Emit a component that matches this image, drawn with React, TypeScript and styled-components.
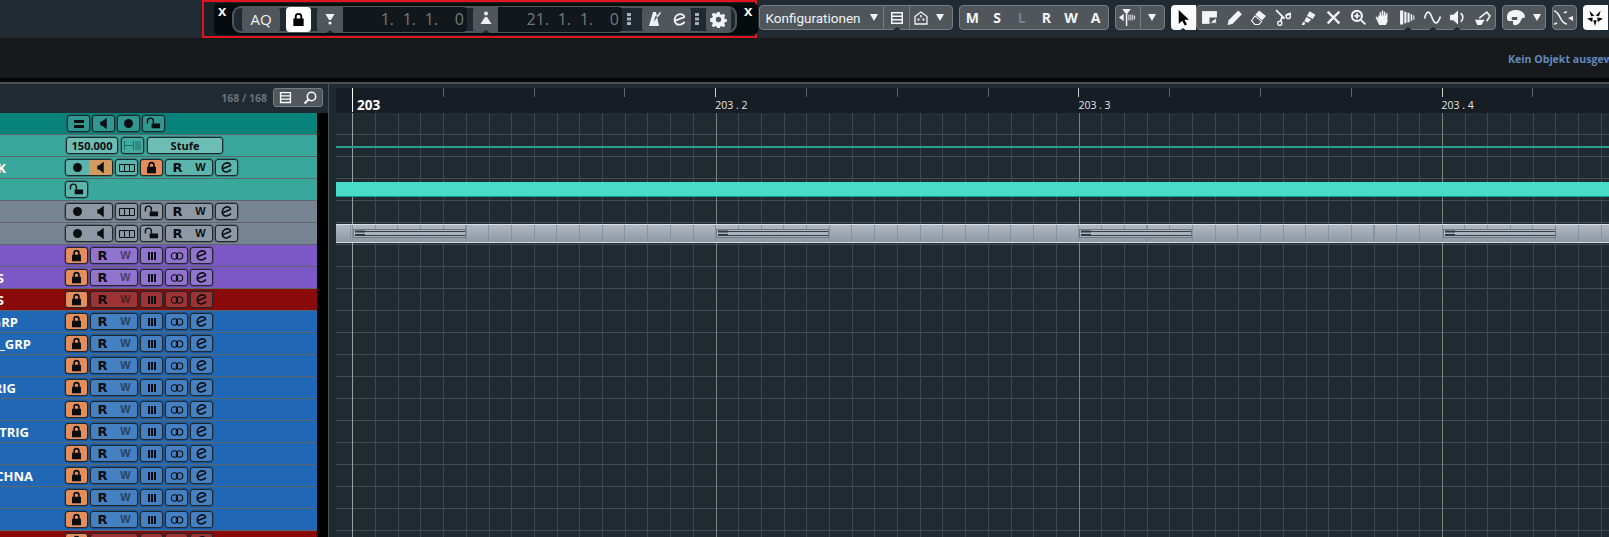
import React from "react";
import styled, { createGlobalStyle } from "styled-components";

const GlobalStyle = createGlobalStyle`
  html, body { margin: 0; padding: 0; background: #17191b; overflow: hidden; }
  * { box-sizing: border-box; }
`;

const Page = styled.div`
  width: 1609px;
  height: 537px;
  overflow: hidden;
  display: flex;
  flex-direction: column;
  font-family: "Open Sans", "Liberation Sans", sans-serif;
  background: #17191b;
`;

const TopBar = styled.div`
  height: 38px;
  flex: none;
  display: flex;
  align-items: flex-start;
  padding-left: 202px;
  background: #1f2a32;
`;

const RedFrame = styled.div`
  width: 555px;
  height: 38px;
  flex: none;
  display: flex;
  align-items: stretch;
  padding: 1px 0 1px 10px;
  border: 2px solid #e0141e;
  background: #1a2127;
`;

const BlackPanel = styled.div`
  flex: 1;
  display: flex;
  align-items: center;
  border-radius: 5px;
  background: #060b0e;
  padding-left: 4px;
`;

const CloseMark = styled.span<{ $ml?: number }>`
  width: 14px;
  flex: none;
  align-self: flex-start;
  margin-left: ${(p) => p.$ml ?? 0}px;
  color: #fff;
  font: bold 15px/16px "Liberation Sans", sans-serif;
`;

const Capsule = styled.div`
  width: 505px;
  height: 27px;
  display: flex;
  align-items: center;
  padding-left: 8px;
  border: 2px solid #4f575c;
  border-radius: 9px;
  background: #1f2a30;
`;

const PanelButton = styled.div<{ $w: number; $gap?: number; $white?: boolean; $side?: string }>`
  position: relative;
  width: ${(p) => p.$w}px;
  height: 25px;
  flex: none;
  margin-right: ${(p) => p.$gap ?? 0}px;
  display: flex;
  align-items: center;
  justify-content: center;
  color: ${(p) => (p.$white ? "#000" : "#f0f2f3")};
  background: ${(p) => (p.$white ? "#fff" : "#50565c")};
  border-radius: ${(p) => p.$side ?? "4px"};
  font-size: 15px;
`;

const TimeField = styled.div<{ $gap: number }>`
  width: 124px;
  height: 25px;
  flex: none;
  display: flex;
  justify-content: flex-end;
  align-items: center;
  margin-right: ${(p) => p.$gap}px;
  padding-right: 3px;
  border-radius: 0 4px 4px 0;
  background: #11171b;
  color: #737a7f;
  font-size: 16px;
`;

const TimeSegment = styled.span<{ $w: number }>`
  width: ${(p) => p.$w}px;
  text-align: right;
  white-space: nowrap;
`;

const PanelGroup = styled.div`
  width: 49px;
  height: 25px;
  flex: none;
  display: flex;
  align-items: center;
  justify-content: space-around;
  border-radius: 4px;
  background: #50565c;
  color: #f0f2f3;
`;

const DotSlot = styled.div<{ $w: number; $mr: number }>`
  width: ${(p) => p.$w}px;
  margin-right: ${(p) => p.$mr}px;
  flex: none;
  display: flex;
  justify-content: center;
  color: #aab0b4;
`;

const Group = styled.div<{ $ml: number }>`
  height: 25px;
  margin-top: 5px;
  margin-left: ${(p) => p.$ml}px;
  flex: none;
  display: flex;
  background: #50565c;
  border: 1px solid #777d82;
  border-radius: 4px;
  color: #f2f4f5;
`;

const Cell = styled.div<{ $w: number; $divider?: boolean; $pr?: number; $gap?: number }>`
  position: relative;
  width: ${(p) => p.$w}px;
  height: 100%;
  flex: none;
  display: flex;
  align-items: center;
  justify-content: center;
  gap: ${(p) => p.$gap ?? 7}px;
  padding-right: ${(p) => p.$pr ?? 0}px;
  border-left: ${(p) => (p.$divider ? "1px solid #777d82" : "none")};
  font-family: Roboto, "Open Sans", sans-serif;
  font-size: 13.5px;
`;

const WhiteTool = styled.div<{ $ml: number }>`
  position: relative;
  width: 25px;
  height: 25px;
  margin-top: 5px;
  margin-left: ${(p) => p.$ml}px;
  flex: none;
  display: flex;
  align-items: center;
  justify-content: center;
  background: #fbfbfb;
  color: #000;
  border-radius: 4px 0 0 4px;
`;

const Notch = styled.span`
  position: absolute;
  bottom: -1px;
  left: 50%;
  margin-left: -4px;
  width: 0;
  height: 0;
  border-left: 4px solid transparent;
  border-right: 4px solid transparent;
  border-bottom: 3px solid #1f2a32;
`;

const Caret = styled.span`
  width: 0;
  height: 0;
  border-left: 4px solid transparent;
  border-right: 4px solid transparent;
  border-top: 7px solid #f2f4f5;
`;

const StatusLetter = styled.span<{ $dim?: boolean }>`
  width: 24.67px;
  text-align: center;
  font: bold 14px/23px "Open Sans", sans-serif;
  color: ${(p) => (p.$dim ? "#7b8186" : "#f4f6f7")};
`;

const InfoBar = styled.div`
  height: 40px;
  flex: none;
  padding: 14px 0 0 1508px;
  white-space: nowrap;
  overflow: hidden;
  background: #17191b;
  color: #6289bb;
  font-size: 10.6px;
  font-weight: 700;
`;

const Separator = styled.div`
  height: 6px;
  flex: none;
  background: #050607;
  border-bottom: 2px solid #4b5257;
`;

const Main = styled.div`
  flex: 1;
  min-height: 0;
  display: flex;
  background: #1f2a31;
`;

const TrackColumn = styled.div`
  width: 329px;
  flex: none;
  display: flex;
  flex-direction: column;
  border-right: 1px solid #4b5358;
`;

const TrackHead = styled.div`
  height: 29px;
  flex: none;
  display: flex;
  align-items: flex-start;
  justify-content: flex-end;
  gap: 6px;
  padding: 4px 5px 0 0;
`;

const TrackCount = styled.span`
  line-height: 20px;
  color: #687379;
  font-size: 10.5px;
  font-weight: 700;
`;

const HeadButton = styled.div`
  width: 50px;
  height: 19px;
  display: flex;
  align-items: center;
  justify-content: space-around;
  background: #51575d;
  border: 1px solid #777d82;
  border-radius: 3px;
  color: #fff;
`;

const TrackList = styled.div`
  flex: 1;
  background: #000;
`;

const TrackRow = styled.div<{ $tint: string }>`
  width: 317px;
  height: 22px;
  display: flex;
  align-items: flex-start;
  padding-top: 2px;
  background: ${(p) => p.$tint};
  border-bottom: 1px solid #5d666b;
`;

const NameSlot = styled.div<{ $indent: number }>`
  width: ${(p) => p.$indent}px;
  height: 17px;
  flex: none;
`;

const NameText = styled.div<{ $end: number }>`
  width: ${(p) => p.$end}px;
  height: 17px;
  display: flex;
  justify-content: flex-end;
  overflow: hidden;
  white-space: nowrap;
  color: #fff;
  font-size: 13px;
  font-weight: 700;
  line-height: 18px;
`;

const Controls = styled.div<{ $gap?: number }>`
  display: flex;
  gap: ${(p) => p.$gap ?? 2}px;
`;

const toneFill = { lock: "#e48d5d", flat: "rgba(255,255,255,0.05)", light: "rgba(255,255,255,0.26)" };

const TrackButton = styled.div<{ $w?: number; $tone?: keyof typeof toneFill }>`
  width: ${(p) => p.$w ?? 23}px;
  height: 17px;
  flex: none;
  display: flex;
  align-items: center;
  justify-content: center;
  overflow: hidden;
  color: #0b0e10;
  border: 1px solid #20282c;
  box-shadow: 0 0 0 0.5px rgba(30, 38, 42, 0.6);
  border-radius: 3px;
  background: ${(p) => (p.$tone ? toneFill[p.$tone] : "rgba(255,255,255,0.17)")};
`;

const SplitSide = styled.div<{ $active?: boolean }>`
  flex: 1;
  height: 100%;
  display: flex;
  align-items: center;
  justify-content: center;
  background: ${(p) => (p.$active ? "#d49b60" : "transparent")};
`;

const Letter = styled.span<{ $narrow?: boolean; $dim?: boolean }>`
  font: bold ${(p) => (p.$narrow ? "11px" : "13px")} / 15px
    ${(p) => (p.$narrow ? '"Liberation Sans"' : '"DejaVu Sans"')}, sans-serif;
  opacity: ${(p) => (p.$dim ? 0.55 : 1)};
`;

const ValueText = styled.span`
  color: #0b0e10;
  font-size: 11px;
  font-weight: 700;
  line-height: 15px;
`;

const Arrangement = styled.div`
  position: relative;
  margin-left: 7px;
  width: 1273px;
  overflow: hidden;
  flex: none;
  padding-top: 4px;
`;

const Ruler = styled.div`
  height: 25px;
  display: flex;
  padding-left: 16px;
  background: #161d24;
`;

const RulerCell = styled.div<{ $kind: "bar" | "beat" | "sub" }>`
  position: relative;
  width: 90.8px;
  flex: none;
  padding: 10px 0 0 ${(p) => (p.$kind === "bar" ? 5 : 0)}px;
  color: ${(p) => (p.$kind === "bar" ? "#fff" : "#e2e6e8")};
  font-size: ${(p) => (p.$kind === "bar" ? 13.5 : 10.5)}px;
  font-weight: ${(p) => (p.$kind === "bar" ? 700 : 400)};
  line-height: 15px;
  white-space: nowrap;

  &::before {
    content: "";
    position: absolute;
    top: 0;
    left: 0;
    width: 1px;
    height: ${(p) => (p.$kind === "bar" ? 24 : 9)}px;
    background: ${(p) =>
      p.$kind === "bar" ? "#fff" : p.$kind === "beat" ? "#c9cdd0" : "#5f676c"};
  }
`;

const LaneArea = styled.div`
  position: relative;
  height: 424px;
`;

const GridLayer = styled.svg`
  position: absolute;
  inset: 0;
`;

const Lane = styled.div`
  position: relative;
  height: 22px;
`;

const AutomationLine = styled.div`
  position: absolute;
  top: 11px;
  left: 0;
  right: 0;
  height: 2px;
  background: #27a08f;
`;

const CyanEvent = styled.div`
  position: absolute;
  top: 3px;
  left: 0;
  right: 0;
  height: 15px;
  background: #48dcc8;
  border-bottom: 1px solid #149a8c;
`;

const PartStrip = styled.div`
  position: absolute;
  top: 1px;
  left: 0;
  right: 0;
  height: 19px;
  display: flex;
  align-items: center;
  padding-left: 17px;
  border-top: 1px solid #d7dde2;
  border-bottom: 1px solid #d7dde2;
  background:
    repeating-linear-gradient(
      90deg,
      #8592a0 0,
      #8592a0 1px,
      transparent 1px,
      transparent 22.7px
    ) 16px 0,
    linear-gradient(#b0b8c2, #8e98a4);
`;

const PartSlot = styled.div`
  width: 363.2px;
  flex: none;
  display: flex;
`;

function Ico({ size = 16, children }: { size?: number; children: React.ReactNode }) {
  return (
    <svg width={size} height={size} viewBox="0 0 16 16" fill="currentColor" stroke="none">
      {children}
    </svg>
  );
}

const LineSt = { fill: "none", stroke: "currentColor" };

const ListIcon = ({ size = 16 }: { size?: number }) => (
  <Ico size={size}>
    <path d="M2 2h12v12H2zM3.5 3.5v2h9v-2zM3.5 7v2h9V7zM3.5 10.5v2h9v-2z" fillRule="evenodd" />
  </Ico>
);
const SearchIcon = () => (
  <Ico>
    <circle cx="9.5" cy="6.5" r="4.2" {...LineSt} strokeWidth="1.5" />
    <path d="M6.5 9.5L2.5 13.5" {...LineSt} strokeWidth="2" />
  </Ico>
);
const LockIcon = ({ size = 13 }: { size?: number }) => (
  <Ico size={size}>
    <path d="M4 7V5a4 4 0 0 1 8 0v2h1.5v8h-11V7zM6 7h4V5a2 2 0 0 0-4 0z" fillRule="evenodd" />
  </Ico>
);
const OpenLockIcon = () => (
  <Ico size={15}>
    <path d="M1.5 8V5.5a3.2 3.2 0 0 1 6.4 0V8" {...LineSt} strokeWidth="1.5" />
    <path d="M6 8h9v5H6z" />
  </Ico>
);
const RecIcon = () => (
  <Ico size={13}>
    <circle cx="8" cy="8" r="5.5" />
  </Ico>
);
const SpeakerIcon = () => (
  <Ico size={13}>
    <path d="M6 5.5L12 1v14L6 10.5H4v-5z" />
  </Ico>
);
const BoxesIcon = () => (
  <svg width="16" height="10" viewBox="0 0 16 10" fill="none" stroke="currentColor">
    <path d="M.5 1.5h15v7H.5zM5.5 1.5v7M10.5 1.5v7" />
  </svg>
);
const BarsIcon = () => (
  <svg width="10" height="10" viewBox="0 0 10 10">
    <path d="M1 1h2v8H1zM4 1h2v8H4zM7 1h2v8H7z" fill="currentColor" />
  </svg>
);
const LinkIcon = () => (
  <svg width="14" height="10" viewBox="0 0 14 10" fill="none" stroke="currentColor" strokeWidth="1.1">
    <circle cx="4.500" cy="5" r="3.200" />
    <circle cx="9.500" cy="5" r="3.200" />
  </svg>
);
const EditIcon = ({ size = 13 }: { size?: number }) => (
  <Ico size={size}>
    <path d="M3 9.5L13 5.5C13 2.5 9 1.5 6 3C2.5 5 1.5 10 4.5 12.5C7 14.5 11 13.5 13.5 10.5" {...LineSt} strokeWidth="1.9" />
  </Ico>
);
const EqualIcon = () => (
  <svg width="12" height="8" viewBox="0 0 12 8">
    <path d="M1 0h10v3H1zM1 5h10v3H1z" fill="currentColor" />
  </svg>
);
const LeftLocator = () => (
  <Ico>
    <path d="M3.500 3h9L9 9H7z" />
    <circle cx="8" cy="12" r="1.600" />
  </Ico>
);
const RightLocator = () => (
  <Ico>
    <circle cx="8" cy="2.5" r="2" />
    <path d="M7 6h2l4.5 7h-11z" />
  </Ico>
);
const MetronomeIcon = () => (
  <Ico>
    <path d="M6 1h3l3 14H2zM8.2 5.5L6.8 11l5-7.5z" fillRule="evenodd" />
    <path d="M10 6l3.5-4.5" {...LineSt} strokeWidth="1.4" />
  </Ico>
);
const GearIcon = () => (
  <Ico size={17}>
    <path
      d="M6.8 1h2.4l.4 2 1.3.6 1.8-1.1 1.7 1.7-1.1 1.8.6 1.3 2 .4v2.4l-2 .4-.6 1.3 1.1 1.8-1.7 1.7-1.8-1.1-1.3.6-.4 2H6.8l-.4-2-1.3-.6-1.8 1.1-1.7-1.7 1.1-1.8-.6-1.3-2-.4V6.8l2-.4.6-1.3-1.1-1.8 1.7-1.7 1.8 1.1 1.3-.6zM8 5.5a2.5 2.5 0 1 0 0 5 2.5 2.5 0 0 0 0-5z"
      fillRule="evenodd"
    />
  </Ico>
);
const DotsIcon = () => (
  <svg width="4" height="12" viewBox="0 0 4 12">
    <path d="M0 0h4v3H0zM0 4.5h4v3H0zM0 9h4v3H0z" fill="currentColor" />
  </svg>
);
const PresetIcon = () => (
  <Ico>
    <path d="M2 6.5L8 2l6 4.5V14H2z" {...LineSt} strokeWidth="1.3" />
    <path d="M4.5 8.5h2v2h-2zM9.5 8.5h2v2h-2zM7.3 5h1.4v2.5H7.3z" />
  </Ico>
);
const DropIcon = () => (
  <svg width="19" height="19" viewBox="0 0 20 20">
    <path d="M1 10l5-4v8z" fill="currentColor" />
    <path d="M4.500 1h9L9.800 6v13H8.200V6z" fill="currentColor" />
    <path d="M11.500 7v6M13.500 7v6M15.500 7v6M17.500 8v4" stroke="currentColor" />
  </svg>
);

const toolIcons: React.ReactNode[] = [
  <Ico key="range" size={17}>
    <path d="M1 2h14v12H1z" />
    <path d="M8 8h7v6H8z" fill="#50565c" />
    <path d="M9 13l5-4v4z" />
  </Ico>,
  <Ico key="pencil" size={17}>
    <path d="M1.5 15l1-4.5L11.5 1.5 15 5 6 14z" />
  </Ico>,
  <Ico key="eraser" size={17}>
    <path d="M8.5 1.5l6.5 5-3.5 4-6.5-5z" />
    <path d="M4.5 6.5L11 11.5 8.5 14.5H4.5L1.5 11z" {...LineSt} />
  </Ico>,
  <Ico key="scissors" size={17}>
    <path d="M1 1l8 8M10 6l5-2M5 12l2-5" {...LineSt} strokeWidth="1.8" />
    <circle cx="12.5" cy="7" r="2" {...LineSt} strokeWidth="1.3" />
    <circle cx="4.5" cy="13.5" r="2" {...LineSt} strokeWidth="1.3" />
  </Ico>,
  <Ico key="glue" size={17}>
    <path d="M9 2l5.5 3.5L12 9.5 6.5 6.5z" />
    <path d="M6 7.5l4.5 2.5-3 3-3.5-1.5z" />
    <path d="M1.5 15l1.5-3 2 1-1 2z" />
  </Ico>,
  <Ico key="erase" size={17}>
    <path d="M2.5 2.5l11 11M13.5 2.5l-11 11" {...LineSt} strokeWidth="2.2" />
  </Ico>,
  <Ico key="zoom" size={17}>
    <circle cx="6.5" cy="6.5" r="4.7" {...LineSt} strokeWidth="2" />
    <path d="M10 10l4.5 4.5M4 6.5h5M6.5 4v5" {...LineSt} strokeWidth="1.8" />
  </Ico>,
  <Ico key="hand" size={17}>
    <path d="M4 6h1.3V3h1.4v3h.6V1.500h1.400V6h.6V2.500h1.400V6h.6V4h1.400v8l-1.500 3H5l-2.500-5-1-2.500 1-.5L4 9z" />
  </Ico>,
  <Ico key="comp" size={17}>
    <path d="M1 1.500h3v13H1zM5 2.500h2v11H5zM8 3.500h2v9H8zM11 5h1.500v6H11zM13.500 6h1v4h-1z" />
  </Ico>,
  <Ico key="wave" size={17}>
    <path d="M0.500 9C2.500 1 5 1 7.500 8s5 7 8 -1" {...LineSt} strokeWidth="1.6" />
  </Ico>,
  <Ico key="volume" size={17}>
    <path d="M1 5.500h3L8.500 1.500v13L4 10.500H1z" />
    <path d="M11 4a5 5 0 0 1 0 8" {...LineSt} strokeWidth="1.5" />
  </Ico>,
  <Ico key="paint" size={17}>
    <path d="M1 10h9l-3 5H3z" />
    <path d="M5 8.500L12 3l3 3.500-3 5" {...LineSt} strokeWidth="1.5" />
  </Ico>,
];

const CursorIcon = () => (
  <Ico size={17}>
    <path d="M3.500 1v13l3.300-3 2.400 4.500 2-1-2.300-4.400h4.300z" />
  </Ico>
);
const FaceIcon = () => (
  <svg width="20" height="18" viewBox="0 0 20 18">
    <path
      d="M1 8C1 3 5 1 10 1s9 3 9 7c0 1-2 1-3 1-1 3-3 7-6 7-3 1-3-1-3-4H3C1 12 1 10 1 8zM6 8a3 3 0 0 0 0 3h5a3 3 0 0 0 0-3z"
      fill="currentColor"
      fillRule="evenodd"
    />
  </svg>
);
const CurveIcon = () => (
  <svg width="22" height="18" viewBox="0 0 22 18" fill="none" stroke="currentColor" strokeWidth="1.500">
    <path d="M1 2c6 0 6 13 13 13M1 15c1 0 2-.5 3-1M11 4c1-1 2-1 3-1" />
    <path d="M15 9l5-2v5z" fill="currentColor" stroke="none" />
  </svg>
);
const CollapseIcon = () => (
  <Ico size={18}>
    <path d="M3 1.500l4.500 4.500-3 .5zM13 1.500l-4.500 4.500 3 .5zM1 8.500l5-1-.5 4zM15 8.500l-5-1 .5 4zM6.500 10l1.500 5 1.500-5z" />
  </Ico>
);

const PartDrawing = () => (
  <svg width="113" height="9" viewBox="0 0 113 9">
    <rect x="0.500" y="0.500" width="112" height="8" fill="#aab2bb" stroke="#6e7b87" />
    <path d="M2 1.500h10v2H2zM2 5h10v2H2z" fill="#33383c" />
    <path d="M12 2.500h100M12 6.500h100" stroke="#3a3f43" />
  </svg>
);

type TrackSpec = {
  tint: string;
  name?: string;
  end?: number;
  kind: "folder" | "tempo" | "master" | "lockOnly" | "audio" | "group";
};

const TEAL = "#3aa79c";
const SLATE = "#778493";
const PURPLE = "#7b58c5";
const CRIMSON = "#8a0a0c";
const BLUE = "#2067b6";

const tracks: TrackSpec[] = [
  { tint: "#08837c", kind: "folder" },
  { tint: TEAL, kind: "tempo" },
  { tint: TEAL, kind: "master", name: "K", end: 6 },
  { tint: TEAL, kind: "lockOnly" },
  { tint: SLATE, kind: "audio" },
  { tint: SLATE, kind: "audio" },
  { tint: PURPLE, kind: "group" },
  { tint: PURPLE, kind: "group", name: "S", end: 4 },
  { tint: CRIMSON, kind: "group", name: "S", end: 4 },
  { tint: BLUE, kind: "group", name: "GRP", end: 18 },
  { tint: BLUE, kind: "group", name: "_GRP", end: 31 },
  { tint: BLUE, kind: "group" },
  { tint: BLUE, kind: "group", name: "RIG", end: 16 },
  { tint: BLUE, kind: "group" },
  { tint: BLUE, kind: "group", name: "TRIG", end: 29 },
  { tint: BLUE, kind: "group" },
  { tint: BLUE, kind: "group", name: "CHNA", end: 33 },
  { tint: BLUE, kind: "group" },
  { tint: BLUE, kind: "group" },
  { tint: CRIMSON, kind: "group" },
];

function ReadWrite({ dimWrite }: { dimWrite?: boolean }) {
  return (
    <TrackButton $w={48}>
      <SplitSide>
        <Letter>R</Letter>
      </SplitSide>
      <SplitSide>
        <Letter $narrow $dim={dimWrite}>W</Letter>
      </SplitSide>
    </TrackButton>
  );
}

function AudioControls({ locked, active }: { locked?: boolean; active?: boolean }) {
  return (
    <Controls>
      <TrackButton $w={48}>
        <SplitSide>
          <RecIcon />
        </SplitSide>
        <SplitSide $active={active}>
          <SpeakerIcon />
        </SplitSide>
      </TrackButton>
      <TrackButton>
        <BoxesIcon />
      </TrackButton>
      <TrackButton $tone={locked ? "lock" : undefined}>
        {locked ? <LockIcon /> : <OpenLockIcon />}
      </TrackButton>
      <ReadWrite />
      <TrackButton>
        <EditIcon />
      </TrackButton>
    </Controls>
  );
}

function TrackControls({ kind }: { kind: TrackSpec["kind"] }) {
  switch (kind) {
    case "folder":
      return (
        <Controls>
          <TrackButton>
            <EqualIcon />
          </TrackButton>
          <TrackButton>
            <SpeakerIcon />
          </TrackButton>
          <TrackButton>
            <RecIcon />
          </TrackButton>
          <TrackButton>
            <OpenLockIcon />
          </TrackButton>
        </Controls>
      );
    case "tempo":
      return (
        <Controls $gap={3}>
          <TrackButton $w={52} $tone="light">
            <ValueText>150.000</ValueText>
          </TrackButton>
          <TrackButton $tone="flat">
            <svg width="17" height="9" viewBox="0 0 17 9" fill="none" stroke="#1c6f68">
              <path d="M.5 0v9M.5 4.500h9M9.500 0v9M12 0v9M14 0v9M16 0v9" />
            </svg>
          </TrackButton>
          <TrackButton $w={76} $tone="light">
            <ValueText>Stufe</ValueText>
          </TrackButton>
        </Controls>
      );
    case "master":
      return <AudioControls locked active />;
    case "lockOnly":
      return (
        <Controls>
          <TrackButton>
            <OpenLockIcon />
          </TrackButton>
        </Controls>
      );
    case "audio":
      return <AudioControls />;
    default:
      return (
        <Controls>
          <TrackButton $tone="lock">
            <LockIcon />
          </TrackButton>
          <ReadWrite dimWrite />
          <TrackButton>
            <BarsIcon />
          </TrackButton>
          <TrackButton>
            <LinkIcon />
          </TrackButton>
          <TrackButton>
            <EditIcon />
          </TrackButton>
        </Controls>
      );
  }
}

const indents: Partial<Record<TrackSpec["kind"], number>> = { folder: 67, tempo: 66 };

const rulerCells = Array.from({ length: 15 }, (_, i) => {
  if (i === 0) return { kind: "bar" as const, label: "203" };
  if (i % 4 === 0) return { kind: "beat" as const, label: `203 . ${i / 4 + 1}` };
  return { kind: "sub" as const, label: "" };
});

const gridColumns = Array.from({ length: 56 }, (_, i) => i);
const gridRows = Array.from({ length: 20 }, (_, i) => 21 + i * 22);

function gridStroke(i: number) {
  if (i === 0) return "#9a9c9d";
  return i % 16 === 0 ? "#7b7f81" : "#3f474b";
}

export default function App() {
  return (
    <Page>
      <GlobalStyle />
      <TopBar>
        <RedFrame>
          <BlackPanel>
            <CloseMark>x</CloseMark>
            <Capsule>
              <PanelButton $w={38} $gap={6}>AQ</PanelButton>
              <PanelButton $w={25} $gap={6} $white>
                <LockIcon size={15} />
              </PanelButton>
              <PanelButton $w={26} $side="4px 0 0 4px">
                <LeftLocator />
                <Notch />
              </PanelButton>
              <TimeField $gap={6}>
                <TimeSegment $w={22}>1.</TimeSegment>
                <TimeSegment $w={22}>1.</TimeSegment>
                <TimeSegment $w={22}>1.</TimeSegment>
                <TimeSegment $w={26}>0</TimeSegment>
              </TimeField>
              <PanelButton $w={25} $side="4px 0 0 4px">
                <RightLocator />
                <Notch />
              </PanelButton>
              <TimeField $gap={0}>
                <TimeSegment $w={30}>21.</TimeSegment>
                <TimeSegment $w={22}>1.</TimeSegment>
                <TimeSegment $w={22}>1.</TimeSegment>
                <TimeSegment $w={26}>0</TimeSegment>
              </TimeField>
              <DotSlot $w={14} $mr={6}>
                <DotsIcon />
              </DotSlot>
              <PanelGroup>
                <MetronomeIcon />
                <EditIcon size={15} />
              </PanelGroup>
              <DotSlot $w={12} $mr={3}>
                <DotsIcon />
              </DotSlot>
              <PanelButton $w={25}>
                <GearIcon />
              </PanelButton>
            </Capsule>
            <CloseMark $ml={7}>x</CloseMark>
          </BlackPanel>
        </RedFrame>

        <Group $ml={2}>
          <Cell $w={123} $gap={9}>
            <span>Konfigurationen</span>
            <Caret />
          </Cell>
          <Cell $w={26} $divider>
            <ListIcon />
            <Notch />
          </Cell>
          <Cell $w={43} $divider $pr={6}>
            <PresetIcon />
            <Caret />
          </Cell>
        </Group>

        <Group $ml={6}>
          <StatusLetter>M</StatusLetter>
          <StatusLetter>S</StatusLetter>
          <StatusLetter $dim>L</StatusLetter>
          <StatusLetter>R</StatusLetter>
          <StatusLetter>W</StatusLetter>
          <StatusLetter>A</StatusLetter>
        </Group>

        <Group $ml={6}>
          <Cell $w={24}>
            <DropIcon />
          </Cell>
          <Cell $w={24} $divider>
            <Caret />
          </Cell>
        </Group>

        <WhiteTool $ml={6}>
          <CursorIcon />
          <Notch />
        </WhiteTool>
        <Group $ml={0}>
          {toolIcons.map((icon, i) => (
            <Cell $w={24.8} key={i}>
              {icon}
              {i >= 8 && i <= 10 && <Notch />}
            </Cell>
          ))}
        </Group>

        <Group $ml={6}>
          <Cell $w={42}>
            <FaceIcon />
            <Caret />
          </Cell>
        </Group>
        <Group $ml={6}>
          <Cell $w={23}>
            <CurveIcon />
          </Cell>
        </Group>
        <WhiteTool $ml={6}>
          <CollapseIcon />
        </WhiteTool>
      </TopBar>

      <InfoBar>Kein Objekt ausgewählt</InfoBar>
      <Separator />

      <Main>
        <TrackColumn>
          <TrackHead>
            <TrackCount>168 / 168</TrackCount>
            <HeadButton>
              <ListIcon size={15} />
              <SearchIcon />
            </HeadButton>
          </TrackHead>
          <TrackList>
            {tracks.map((track, i) => (
              <TrackRow $tint={track.tint} key={i}>
                <NameSlot $indent={indents[track.kind] ?? 65}>
                  {track.name && <NameText $end={track.end ?? 0}>{track.name}</NameText>}
                </NameSlot>
                <TrackControls kind={track.kind} />
              </TrackRow>
            ))}
          </TrackList>
        </TrackColumn>

        <Arrangement>
          <Ruler>
            {rulerCells.map((cell, i) => (
              <RulerCell $kind={cell.kind} key={i}>
                {cell.label}
              </RulerCell>
            ))}
          </Ruler>
          <LaneArea>
            <GridLayer width="1273" height="424" shapeRendering="crispEdges">
              {gridRows.map((y) => (
                <line key={y} x1="0" x2="1273" y1={y + 0.5} y2={y + 0.5} stroke="#444c50" />
              ))}
              {gridColumns.map((i) => {
                const x = Math.round(16.3 + i * 22.7) + 0.5;
                return <line key={i} x1={x} x2={x} y1="0" y2="424" stroke={gridStroke(i)} />;
              })}
            </GridLayer>
            <Lane />
            <Lane>
              <AutomationLine />
            </Lane>
            <Lane />
            <Lane>
              <CyanEvent />
            </Lane>
            <Lane />
            <Lane>
              <PartStrip>
                {[0, 1, 2, 3].map((n) => (
                  <PartSlot key={n}>
                    <PartDrawing />
                  </PartSlot>
                ))}
              </PartStrip>
            </Lane>
          </LaneArea>
        </Arrangement>
      </Main>
    </Page>
  );
}
